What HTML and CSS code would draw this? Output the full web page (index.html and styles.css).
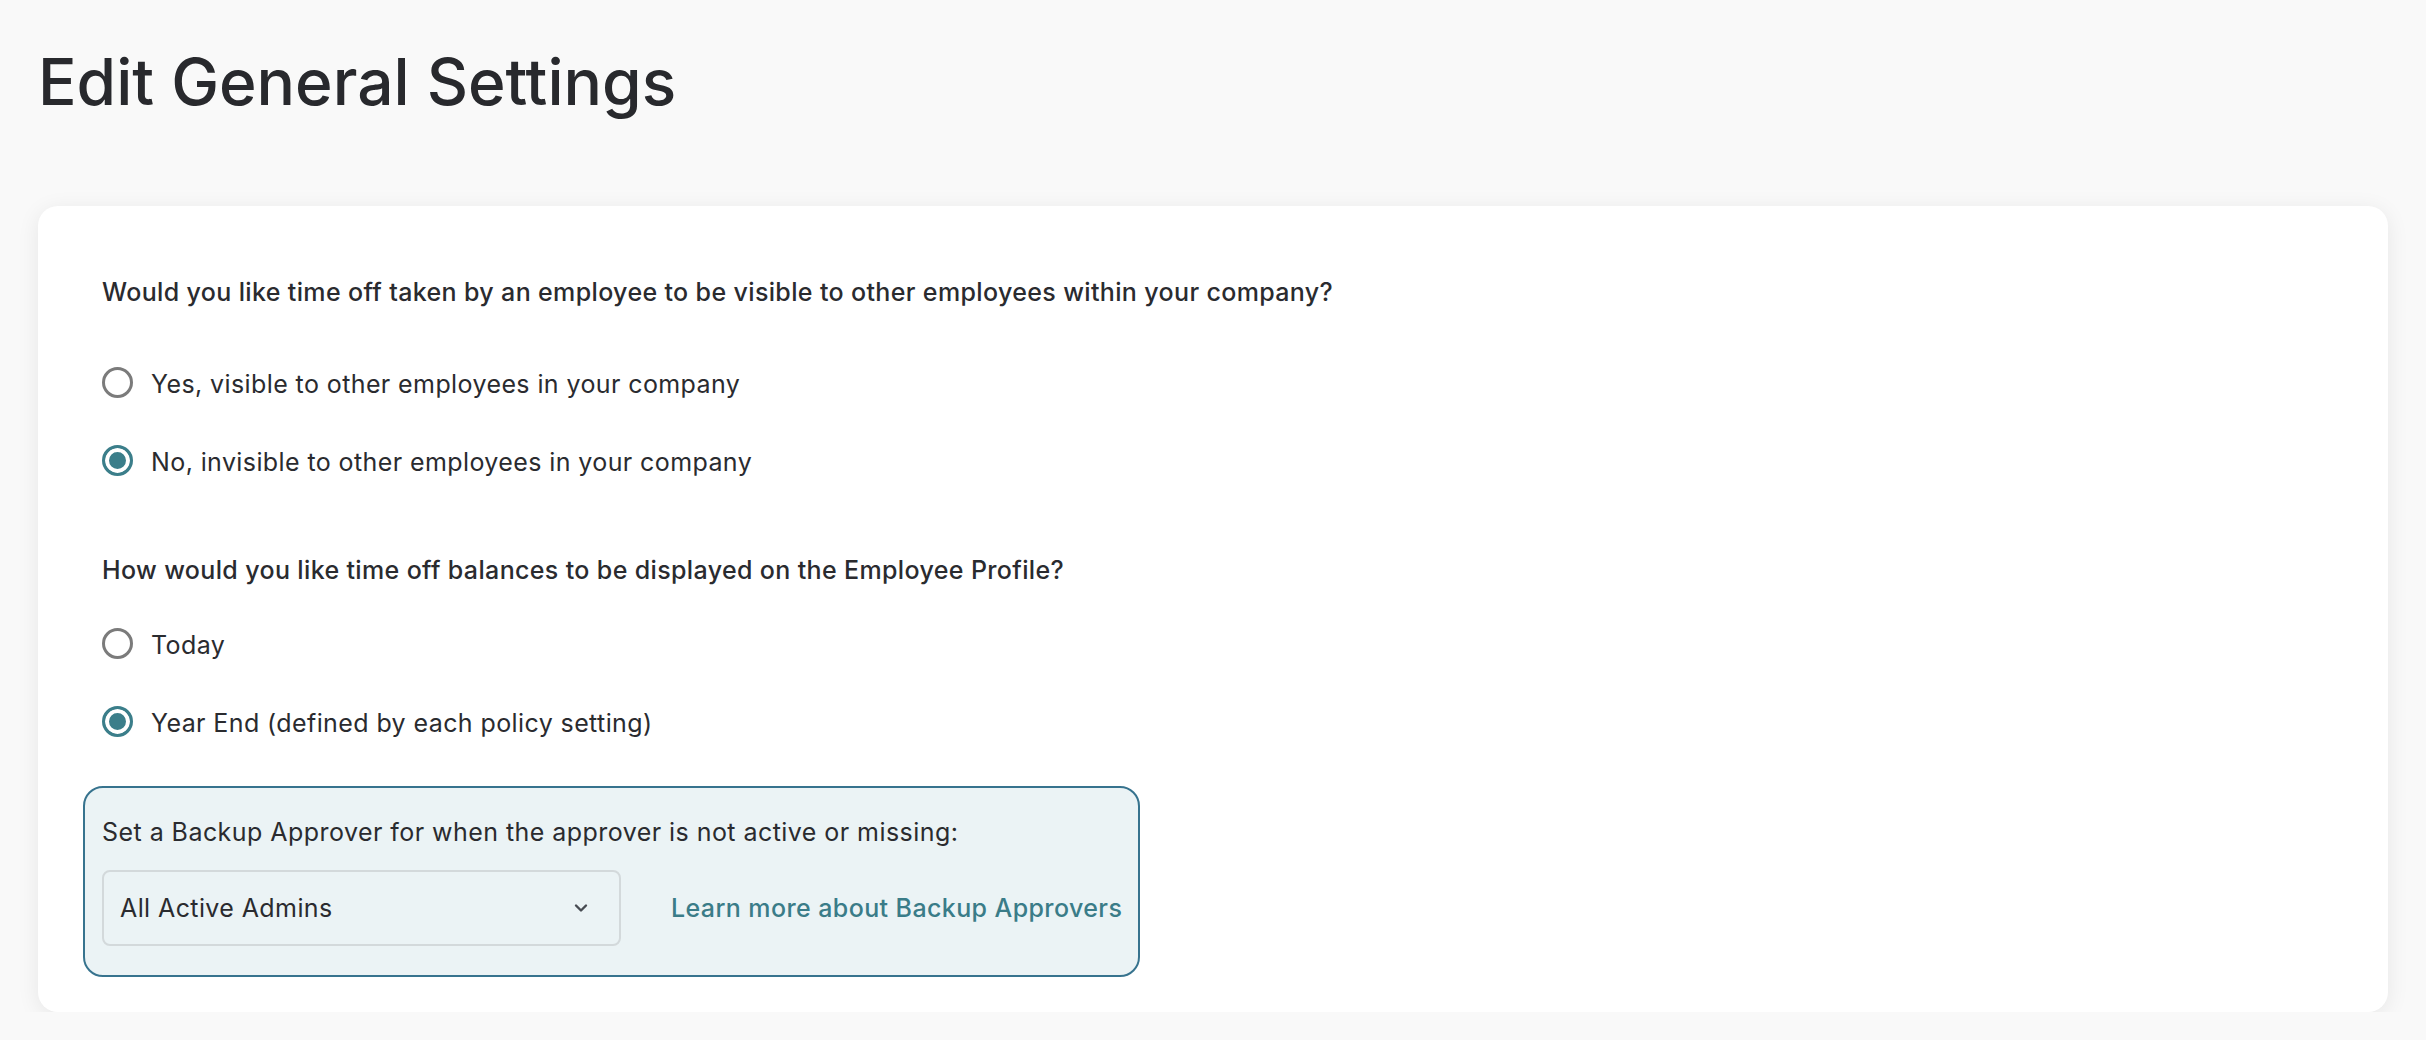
FILE: index.html
```html
<!DOCTYPE html>
<html lang="en">
<head>
    <meta charset="UTF-8">
    <meta name="viewport" content="width=device-width, initial-scale=1.0">
    <title>Edit General Settings</title>
    <link rel="stylesheet" href="styles.css">
</head>
<body>

    <h1 class="page-title">Edit General Settings</h1>

    <div class="card">
        <!-- visibility of time off -->
        <div class="setting">
            <p class="question tall">Would you like time off taken by an employee to be visible to other employees within your company?</p>
            <label class="option">
                <input type="radio" name="visibility">
                <span>Yes, visible to other employees in your company</span>
            </label>
            <label class="option">
                <input type="radio" name="visibility" checked>
                <span>No, invisible to other employees in your company</span>
            </label>
        </div>

        <!-- balance display -->
        <div class="setting">
            <p class="question">How would you like time off balances to be displayed on the Employee Profile?</p>
            <label class="option">
                <input type="radio" name="balance">
                <span>Today</span>
            </label>
            <label class="option">
                <input type="radio" name="balance" checked>
                <span>Year End (defined by each policy setting)</span>
            </label>
        </div>

        <!-- backup approver -->
        <div class="backup">
            <p class="backup-text">Set a Backup Approver for when the approver is not active or missing:</p>
            <div class="backup-row">
                <div class="select">
                    <span>All Active Admins</span>
                    <svg class="chevron" width="14" height="10" viewBox="0 0 14 10">
                        <path d="M2 2.5 L7 7.5 L12 2.5" fill="none" stroke="#474b52" stroke-width="2.4" stroke-linecap="round" stroke-linejoin="round"/>
                    </svg>
                </div>
                <a class="link" href="#">Learn more about Backup Approvers</a>
            </div>
        </div>
    </div>

</body>
</html>
```

FILE: styles.css
```css
body {
    font-family: Inter, "Noto Sans", sans-serif;
    background: #f9f9f9;
    color: #2a2b2f;
    margin: 0;
    padding: 0 38px;
}
.page-title {
    font-size: 64px;
    font-weight: 500;
    line-height: 76px;
    color: #28292d;
    margin: 44px 0 86px;
}
.card {
    background: white;
    border-radius: 20px;
    box-shadow: 0px 4px 22px rgba(0, 0, 0, 0.08);
    padding: 68px 64px 35px;
}
.setting {
    display: flex;
    flex-direction: column;
    align-items: flex-start;
}
.setting + .setting {
    margin-top: 72px;
}
.question {
    font-size: 25px;
    font-weight: 500;
    letter-spacing: 0.36px;
    line-height: 36px;
    margin: 0 0 39px;
}
.question.tall {
    margin-bottom: 56px;
}
.option {
    display: flex;
    align-items: center;
    height: 36px;
    font-size: 25px;
    letter-spacing: 0.4px;
    line-height: 36px;
    cursor: pointer;
}
.option + .option {
    margin-top: 42px;
}
.option input {
    appearance: none;
    -webkit-appearance: none;
    width: 31px;
    height: 31px;
    margin: -3px 18px 0 0;
    border: 3px solid #7b7b7b;
    border-radius: 50%;
    background: white;
    flex-shrink: 0;
}
.option input:checked {
    border-color: #3b7e8a;
    background: #3b7e8a;
    box-shadow: inset 0 0 0 4px white;
}
.backup {
    width: fit-content;
    margin: 45px 0 0 -19px;
    padding: 26px 16px 29px 17px;
    border: 2px solid #37738e;
    border-radius: 20px;
    background: #ebf3f5;
}
.backup-text {
    font-size: 25px;
    letter-spacing: 0.45px;
    line-height: 36px;
    margin: 0 0 20px;
}
.backup-row {
    display: flex;
    align-items: center;
    gap: 50px;
}
.select {
    box-sizing: border-box;
    width: 519px;
    height: 76px;
    display: flex;
    align-items: center;
    justify-content: space-between;
    padding: 0 31px 0 16px;
    border: 2px solid #d3d9db;
    border-radius: 8px;
    font-size: 25px;
    letter-spacing: 0.4px;
    color: #2a2b2f;
}
.chevron {
    display: block;
}
.link {
    font-size: 25px;
    font-weight: 500;
    letter-spacing: 0.4px;
    color: #3a7c88;
    text-decoration: none;
}
```
